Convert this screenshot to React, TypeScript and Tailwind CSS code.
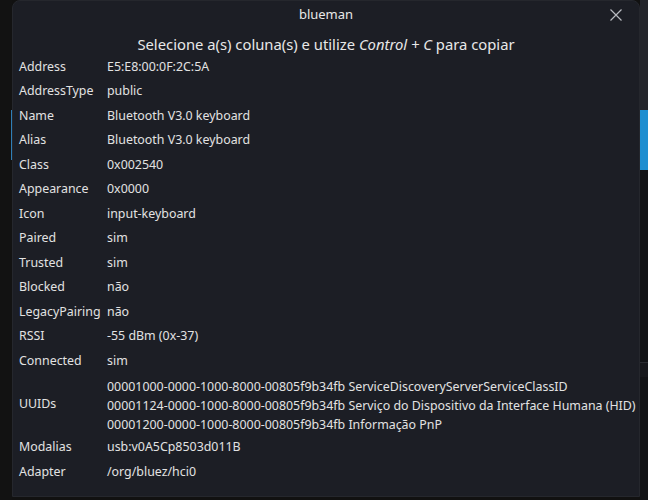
const rows: [string, string][] = [
  ["Address", "E5:E8:00:0F:2C:5A"],
  ["AddressType", "public"],
  ["Name", "Bluetooth V3.0 keyboard"],
  ["Alias", "Bluetooth V3.0 keyboard"],
  ["Class", "0x002540"],
  ["Appearance", "0x0000"],
  ["Icon", "input-keyboard"],
  ["Paired", "sim"],
  ["Trusted", "sim"],
  ["Blocked", "não"],
  ["LegacyPairing", "não"],
  ["RSSI", "-55 dBm (0x-37)"],
  ["Connected", "sim"],
];

const uuids = [
  "00001000-0000-1000-8000-00805f9b34fb ServiceDiscoveryServerServiceClassID",
  "00001124-0000-1000-8000-00805f9b34fb Serviço do Dispositivo da Interface Humana (HID)",
  "00001200-0000-1000-8000-00805f9b34fb Informação PnP",
];

function Row({ label, children }: { label: string; children: React.ReactNode }) {
  return (
    <div className="flex min-h-[24.5px] shrink-0 items-center">
      <div className="w-[88px] shrink-0">{label}</div>
      <div className="whitespace-nowrap">{children}</div>
    </div>
  );
}

export default function App() {
  return (
    <div
      className="flex h-[500px] w-[648px] overflow-hidden bg-[#111111] text-[12.4px] text-[#e2e2e2]"
      style={{ fontFamily: '"Noto Sans", sans-serif' }}
    >
      <div className="flex w-[12px] shrink-0 flex-col items-end bg-[#121212] pt-[110px]">
        <div className="h-[50px] w-[1px] bg-[#2f7fb8]" />
      </div>
      <div className="flex h-[497px] w-[628px] shrink-0 flex-col overflow-hidden rounded-t-[8px] border border-[#25272d] bg-[#1c1e25]">
        <div className="relative flex h-[27px] shrink-0 items-center justify-center text-[13px] text-[#e8e8e8]">
          blueman
          <svg
            className="absolute right-[16px] top-[7px]"
            width="14"
            height="14"
            viewBox="0 0 14 14"
            fill="none"
            stroke="#b8bac0"
            strokeWidth="1.2"
          >
            <path d="M1.5 1.5l11 11M12.5 1.5l-11 11" />
          </svg>
        </div>
        <div className="flex h-[27px] shrink-0 justify-center pt-[5px] text-[14.8px] leading-[22px] text-[#e8e8e8]">
          Selecione a(s) coluna(s) e utilize&nbsp;<i>Control + C</i>&nbsp;para copiar
        </div>
        <div className="flex flex-col px-[6px]">
          {rows.map(([k, v]) => (
            <Row key={k} label={k}>
              {v}
            </Row>
          ))}
          <Row label="UUIDs">
            <div className="flex flex-col pb-[2px] pt-[3px] leading-[19px]">
              {uuids.map((u) => (
                <div key={u}>{u}</div>
              ))}
            </div>
          </Row>
          <Row label="Modalias">usb:v0A5Cp8503d011B</Row>
          <Row label="Adapter">/org/bluez/hci0</Row>
        </div>
      </div>
      <div className="flex w-[8px] shrink-0 flex-col bg-[#121316]">
        <div className="h-[110px] bg-[#24262b]" />
        <div className="h-[60px] bg-[#1f8ed0]" />
        <div className="h-[192px]" />
        <div className="h-[1px] bg-[#2a2c31]" />
        <div className="h-[14px] bg-[#17181c]" />
      </div>
    </div>
  );
}
